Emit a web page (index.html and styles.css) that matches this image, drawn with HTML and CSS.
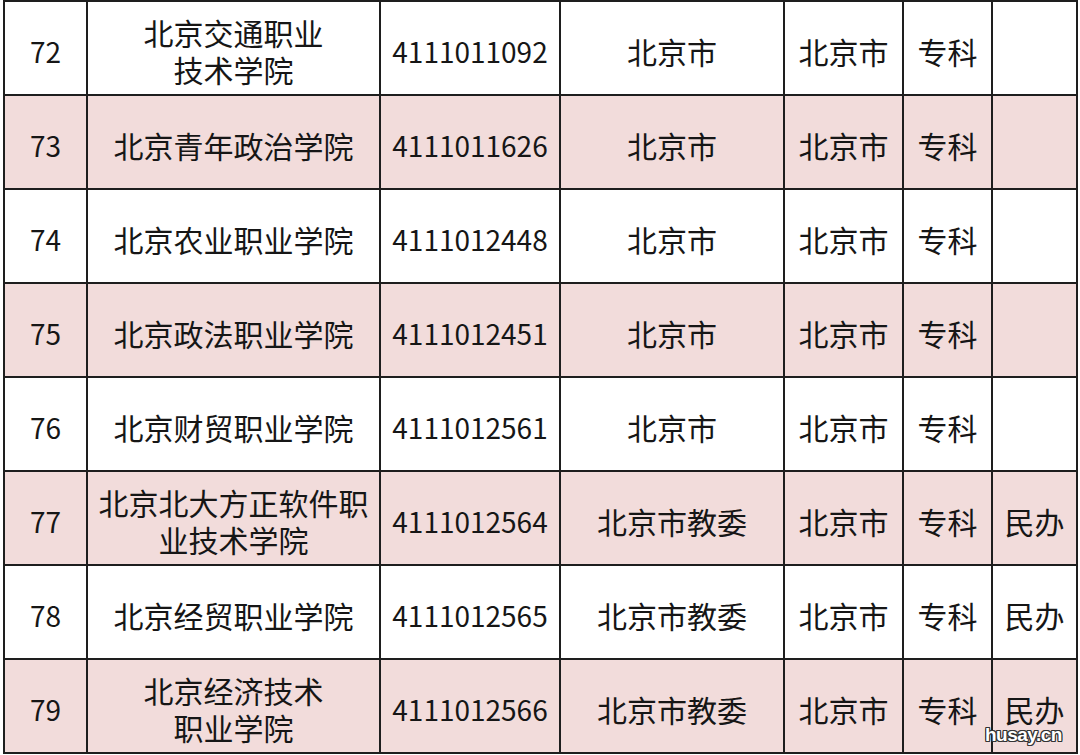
FILE: index.html
```html
<!DOCTYPE html>
<html lang="zh-CN">
<head>
<meta charset="utf-8">
<link rel="stylesheet" href="styles.css">
</head>
<body>
<div class="sheet">
  <div class="c n">72</div><div class="c two">北京交通职业<br>技术学院</div><div class="c n">4111011092</div><div class="c">北京市</div><div class="c">北京市</div><div class="c">专科</div><div class="c"></div>
  <div class="c n p">73</div><div class="c p">北京青年政治学院</div><div class="c n p">4111011626</div><div class="c p">北京市</div><div class="c p">北京市</div><div class="c p">专科</div><div class="c p"></div>
  <div class="c n">74</div><div class="c">北京农业职业学院</div><div class="c n">4111012448</div><div class="c">北京市</div><div class="c">北京市</div><div class="c">专科</div><div class="c"></div>
  <div class="c n p">75</div><div class="c p">北京政法职业学院</div><div class="c n p">4111012451</div><div class="c p">北京市</div><div class="c p">北京市</div><div class="c p">专科</div><div class="c p"></div>
  <div class="c n">76</div><div class="c">北京财贸职业学院</div><div class="c n">4111012561</div><div class="c">北京市</div><div class="c">北京市</div><div class="c">专科</div><div class="c"></div>
  <div class="c n p">77</div><div class="c p two">北京北大方正软件职<br>业技术学院</div><div class="c n p">4111012564</div><div class="c p">北京市教委</div><div class="c p">北京市</div><div class="c p">专科</div><div class="c p">民办</div>
  <div class="c n">78</div><div class="c">北京经贸职业学院</div><div class="c n">4111012565</div><div class="c">北京市教委</div><div class="c">北京市</div><div class="c">专科</div><div class="c">民办</div>
  <div class="c n p">79</div><div class="c p two">北京经济技术<br>职业学院</div><div class="c n p">4111012566</div><div class="c p">北京市教委</div><div class="c p">北京市</div><div class="c p">专科</div><div class="c p">民办</div>
</div>
<div class="mark">husay.cn</div>
</body>
</html>
```
FILE: styles.css
```css
html, body {
  margin: 0;
  padding: 0;
  background: #ffffff;
  overflow: hidden;
}
body {
  width: 1080px;
  height: 755px;
  position: relative;
  font-family: "Noto Sans CJK SC", "Noto Sans", sans-serif;
  color: #161616;
}
.sheet {
  margin-left: 3px;
  margin-top: 0;
  width: 1075px;
  box-sizing: border-box;
  padding: 2px;
  background: #1e1e1e;
  display: grid;
  grid-template-columns: 81px 291px 178px 222px 117px 87px 83px;
  grid-auto-rows: 92px;
  gap: 2px;
}
.c {
  background: #ffffff;
  display: flex;
  align-items: center;
  justify-content: center;
  text-align: center;
  font-size: 30px;
  line-height: 37px;
  padding-top: 6px;
  box-sizing: border-box;
  white-space: nowrap;
}
.c.n {
  font-size: 28px;
}
.c.p {
  background: #f2dcdb;
}
.mark {
  position: absolute;
  left: 985px;
  top: 724px;
  font-family: "Liberation Sans", Arial, sans-serif;
  font-weight: bold;
  font-size: 19px;
  letter-spacing: -0.5px;
  color: #ffffff;
  text-shadow: 1px 1px 0 #333, -1px -1px 0 #333, 1px -1px 0 #333, -1px 1px 0 #333, 0 1px 0 #333, 1px 0 0 #333, 0 -1px 0 #333, -1px 0 0 #333;
}
```
